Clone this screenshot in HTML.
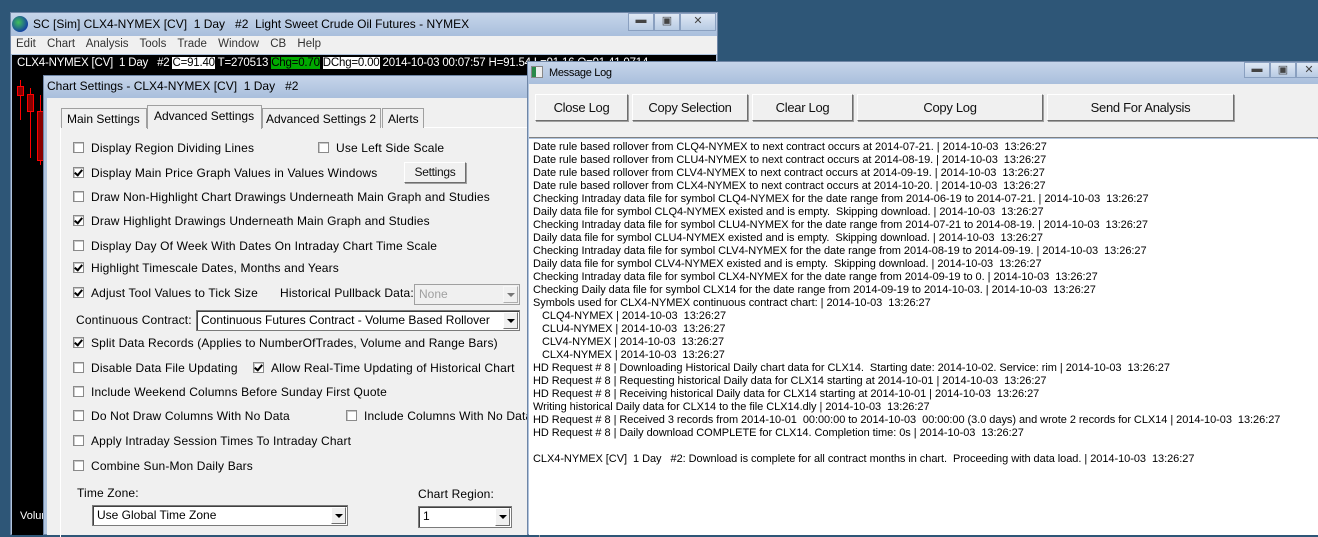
<!DOCTYPE html>
<html><head><meta charset="utf-8"><style>
*{margin:0;padding:0;box-sizing:border-box}
body{width:1318px;height:535px;overflow:hidden;background:#2e5677;position:relative;font-family:"Liberation Sans",sans-serif;color:#000}
.a{position:absolute;white-space:nowrap}
.title{background:linear-gradient(#c6d5ea,#a9bfdc);}
.cb{position:absolute;width:11px;height:11px;background:#fff;border:1px solid #8a8a8a;box-shadow:inset 1px 1px 0 #c8c8c8}
.cb.k::after{content:"";position:absolute;left:2px;top:0px;width:3px;height:6px;border:solid #000;border-width:0 2px 2px 0;transform:rotate(40deg)}
.lbl{position:absolute;white-space:nowrap;font-size:12px;letter-spacing:0.15px}
.btn{position:absolute;background:#f0f0f0;border:1px solid;border-color:#fff #6e6e6e #6e6e6e #fff;box-shadow:1px 1px 0 #a0a0a0;font-size:13px;text-align:center;letter-spacing:-0.3px;color:#111}
.combo{position:absolute;background:#fff;border:1px solid #7a7a7a;box-shadow:inset 1px 1px 0 #404040;font-size:12px;padding:2px 4px}
.dd{position:absolute;right:1px;top:1px;bottom:1px;width:15px;background:#f0f0f0;border:1px solid;border-color:#fff #6e6e6e #6e6e6e #fff}
.dd::after{content:"";position:absolute;left:3px;top:6px;border:4px solid transparent;border-top:4px solid #000;border-bottom:0}
.log div{height:13px;line-height:13px;font-size:11px;letter-spacing:-0.05px;white-space:pre}
.wb{position:absolute;top:0;width:26px;height:18px;border:1px solid #8aa0c0;background:linear-gradient(#dfe8f4,#b8cbe3);font-size:11px;text-align:center;color:#444}
</style></head><body>

<div class="a" style="left:10px;top:12px;width:708px;height:523px;background:#b0c4de;border:1px solid #6f86a6"></div>
<div class="a title" style="left:11px;top:13px;width:706px;height:23px"></div>
<div class="a" style="left:12px;top:16px;width:16px;height:16px;border-radius:50%;background:radial-gradient(circle at 40% 40%,#3fc05a,#1544a0 70%)"></div>
<div class="a" style="left:33px;top:17px;font-size:12px">SC [Sim] CLX4-NYMEX [CV]&nbsp; 1 Day &nbsp; #2&nbsp; Light Sweet Crude Oil Futures - NYMEX</div>
<div class="a" style="left:628px;top:13px;width:88px;height:19px">
<div class="wb" style="left:0">▬</div><div class="wb" style="left:26px">▣</div><div class="wb" style="left:52px;width:36px">✕</div></div>
<div class="a" style="left:11px;top:36px;width:706px;height:18px;background:#f0f0f0"></div>
<div class="a" style="left:16px;top:38px;font-size:11.5px;color:#333;word-spacing:8px">Edit Chart Analysis Tools Trade Window CB Help</div>
<div class="a" style="left:12px;top:55px;width:704px;height:480px;background:#000"></div>
<div class="a" style="left:17px;top:57px;font-size:11.5px;color:#fff;letter-spacing:-0.2px">CLX4-NYMEX [CV]&nbsp; 1 Day &nbsp; #2 <span style="background:#fff;color:#000">C=91.40</span> T=270513 <span style="background:#0a0;color:#000">Chg=0.70</span> <span style="background:#fff;color:#000">DChg=0.00</span> 2014-10-03 00:07:57 H=91.54 L=91.16 O=91.41 0714</div>
<div class="a" style="left:20px;top:80px;width:1px;height:40px;background:#f00"></div>
<div class="a" style="left:17px;top:86px;width:7px;height:10px;background:#800;border:1px solid #f00"></div>
<div class="a" style="left:30px;top:88px;width:1px;height:70px;background:#f00"></div>
<div class="a" style="left:27px;top:94px;width:7px;height:18px;background:#800;border:1px solid #f00"></div>
<div class="a" style="left:40px;top:95px;width:1px;height:70px;background:#f00"></div>
<div class="a" style="left:37px;top:111px;width:7px;height:50px;background:#800;border:1px solid #f00"></div>
<div class="a" style="left:20px;top:510px;font-size:11px;color:#fff">Volur</div>

<div class="a" style="left:43px;top:75px;width:490px;height:460px;background:#b0c4de;border:1px solid #6f86a6"></div>
<div class="a title" style="left:44px;top:76px;width:488px;height:22px"></div>
<div class="a" style="left:47px;top:79px;font-size:12px">Chart Settings - CLX4-NYMEX [CV]&nbsp; 1 Day &nbsp; #2</div>
<div class="a" style="left:47px;top:98px;width:486px;height:437px;background:#f0f0f0"></div>
<div class="a" style="left:60px;top:127px;width:480px;height:410px;border:1px solid #fff;border-right:0;border-bottom:0;box-shadow:inset -1px 0 0 #a0a0a0"></div>
<div class="a" style="left:61px;top:108px;width:86px;height:20px;border:1px solid #a0a0a0;border-bottom:0;background:#f0f0f0;font-size:12px;padding:3px 5px">Main Settings</div>
<div class="a" style="left:147px;top:105px;width:115px;height:24px;border:1px solid #a0a0a0;border-bottom:0;background:#f0f0f0;font-size:12px;padding:3px 6px">Advanced Settings</div>
<div class="a" style="left:262px;top:108px;width:119px;height:20px;border:1px solid #a0a0a0;border-bottom:0;background:#f0f0f0;font-size:12px;padding:3px 3px">Advanced Settings 2</div>
<div class="a" style="left:382px;top:108px;width:42px;height:20px;border:1px solid #a0a0a0;border-bottom:0;background:#f0f0f0;font-size:12px;padding:3px 5px">Alerts</div>

<div class="cb" style="left:73px;top:142px"></div><div class="lbl" style="left:91px;top:141px">Display Region Dividing Lines</div>
<div class="cb" style="left:318px;top:142px"></div><div class="lbl" style="left:336px;top:141px">Use Left Side Scale</div>
<div class="cb k" style="left:73px;top:167px"></div><div class="lbl" style="left:91px;top:166px">Display Main Price Graph Values in Values Windows</div>
<div class="btn" style="left:404px;top:162px;width:62px;height:21px;font-size:12px;padding-top:2px">Settings</div>
<div class="cb" style="left:73px;top:191px"></div><div class="lbl" style="left:91px;top:190px">Draw Non-Highlight Chart Drawings Underneath Main Graph and Studies</div>
<div class="cb k" style="left:73px;top:215px"></div><div class="lbl" style="left:91px;top:214px">Draw Highlight Drawings Underneath Main Graph and Studies</div>
<div class="cb" style="left:73px;top:240px"></div><div class="lbl" style="left:91px;top:239px">Display Day Of Week With Dates On Intraday Chart Time Scale</div>
<div class="cb k" style="left:73px;top:262px"></div><div class="lbl" style="left:91px;top:261px">Highlight Timescale Dates, Months and Years</div>
<div class="cb k" style="left:73px;top:287px"></div><div class="lbl" style="left:91px;top:286px">Adjust Tool Values to Tick Size</div>
<div class="lbl" style="left:280px;top:286px">Historical Pullback Data:</div>
<div class="combo" style="left:414px;top:284px;width:106px;height:21px;background:#f0f0f0;color:#a0a0a0;box-shadow:none;border-color:#a0a0a0">None<div class="dd" style="opacity:.5"></div></div>
<div class="lbl" style="left:76px;top:313px">Continuous Contract:</div>
<div class="combo" style="left:196px;top:310px;width:324px;height:21px">Continuous Futures Contract - Volume Based Rollover<div class="dd"></div></div>
<div class="cb k" style="left:73px;top:337px"></div><div class="lbl" style="left:91px;top:336px">Split Data Records (Applies to NumberOfTrades, Volume and Range Bars)</div>
<div class="cb" style="left:73px;top:362px"></div><div class="lbl" style="left:91px;top:361px">Disable Data File Updating</div>
<div class="cb k" style="left:253px;top:362px"></div><div class="lbl" style="left:271px;top:361px">Allow Real-Time Updating of Historical Chart</div>
<div class="cb" style="left:73px;top:386px"></div><div class="lbl" style="left:91px;top:385px">Include Weekend Columns Before Sunday First Quote</div>
<div class="cb" style="left:73px;top:410px"></div><div class="lbl" style="left:91px;top:409px">Do Not Draw Columns With No Data</div>
<div class="cb" style="left:346px;top:410px"></div><div class="lbl" style="left:364px;top:409px">Include Columns With No Data</div>
<div class="cb" style="left:73px;top:435px"></div><div class="lbl" style="left:91px;top:434px">Apply Intraday Session Times To Intraday Chart</div>
<div class="cb" style="left:73px;top:460px"></div><div class="lbl" style="left:91px;top:459px">Combine Sun-Mon Daily Bars</div>
<div class="lbl" style="left:77px;top:486px">Time Zone:</div>
<div class="lbl" style="left:418px;top:487px">Chart Region:</div>
<div class="combo" style="left:92px;top:505px;width:256px;height:21px">Use Global Time Zone<div class="dd"></div></div>
<div class="combo" style="left:418px;top:506px;width:94px;height:22px">1<div class="dd"></div></div>

<div class="a" style="left:527px;top:61px;width:791px;height:474px;background:#b0c4de;border:1px solid #6f86a6"></div>
<div class="a title" style="left:528px;top:62px;width:790px;height:22px"></div>
<div class="a" style="left:531px;top:66px;width:12px;height:12px;background:linear-gradient(90deg,#2a8a4a 0 40%,#eee 40%);border:1px solid #888"></div>
<div class="a" style="left:549px;top:67px;font-size:11px;letter-spacing:-0.3px">Message Log</div>
<div class="a" style="left:1244px;top:62px;width:74px;height:17px">
<div class="wb" style="left:0;height:16px">▬</div><div class="wb" style="left:26px;height:16px">▣</div><div class="wb" style="left:52px;width:26px;height:16px">✕</div></div>
<div class="a" style="left:529px;top:84px;width:789px;height:54px;background:#f0f0f0;border-bottom:1px solid #808080"></div>
<div class="btn" style="left:535px;top:94px;width:93px;height:27px;padding-top:5px">Close Log</div>
<div class="btn" style="left:632px;top:94px;width:116px;height:27px;padding-top:5px">Copy Selection</div>
<div class="btn" style="left:752px;top:94px;width:101px;height:27px;padding-top:5px">Clear Log</div>
<div class="btn" style="left:857px;top:94px;width:186px;height:27px;padding-top:5px">Copy Log</div>
<div class="btn" style="left:1047px;top:94px;width:187px;height:27px;padding-top:5px">Send For Analysis</div>
<div class="a log" style="left:529px;top:139px;width:789px;height:396px;background:#fff;padding:2px 0 0 4px">
<div>Date rule based rollover from CLQ4-NYMEX to next contract occurs at 2014-07-21. | 2014-10-03  13:26:27</div>
<div>Date rule based rollover from CLU4-NYMEX to next contract occurs at 2014-08-19. | 2014-10-03  13:26:27</div>
<div>Date rule based rollover from CLV4-NYMEX to next contract occurs at 2014-09-19. | 2014-10-03  13:26:27</div>
<div>Date rule based rollover from CLX4-NYMEX to next contract occurs at 2014-10-20. | 2014-10-03  13:26:27</div>
<div>Checking Intraday data file for symbol CLQ4-NYMEX for the date range from 2014-06-19 to 2014-07-21. | 2014-10-03  13:26:27</div>
<div>Daily data file for symbol CLQ4-NYMEX existed and is empty.  Skipping download. | 2014-10-03  13:26:27</div>
<div>Checking Intraday data file for symbol CLU4-NYMEX for the date range from 2014-07-21 to 2014-08-19. | 2014-10-03  13:26:27</div>
<div>Daily data file for symbol CLU4-NYMEX existed and is empty.  Skipping download. | 2014-10-03  13:26:27</div>
<div>Checking Intraday data file for symbol CLV4-NYMEX for the date range from 2014-08-19 to 2014-09-19. | 2014-10-03  13:26:27</div>
<div>Daily data file for symbol CLV4-NYMEX existed and is empty.  Skipping download. | 2014-10-03  13:26:27</div>
<div>Checking Intraday data file for symbol CLX4-NYMEX for the date range from 2014-09-19 to 0. | 2014-10-03  13:26:27</div>
<div>Checking Daily data file for symbol CLX14 for the date range from 2014-09-19 to 2014-10-03. | 2014-10-03  13:26:27</div>
<div>Symbols used for CLX4-NYMEX continuous contract chart: | 2014-10-03  13:26:27</div>
<div>   CLQ4-NYMEX | 2014-10-03  13:26:27</div>
<div>   CLU4-NYMEX | 2014-10-03  13:26:27</div>
<div>   CLV4-NYMEX | 2014-10-03  13:26:27</div>
<div>   CLX4-NYMEX | 2014-10-03  13:26:27</div>
<div>HD Request # 8 | Downloading Historical Daily chart data for CLX14.  Starting date: 2014-10-02. Service: rim | 2014-10-03  13:26:27</div>
<div>HD Request # 8 | Requesting historical Daily data for CLX14 starting at 2014-10-01 | 2014-10-03  13:26:27</div>
<div>HD Request # 8 | Receiving historical Daily data for CLX14 starting at 2014-10-01 | 2014-10-03  13:26:27</div>
<div>Writing historical Daily data for CLX14 to the file CLX14.dly | 2014-10-03  13:26:27</div>
<div>HD Request # 8 | Received 3 records from 2014-10-01  00:00:00 to 2014-10-03  00:00:00 (3.0 days) and wrote 2 records for CLX14 | 2014-10-03  13:26:27</div>
<div>HD Request # 8 | Daily download COMPLETE for CLX14. Completion time: 0s | 2014-10-03  13:26:27</div>
<div> </div>
<div>CLX4-NYMEX [CV]  1 Day   #2: Download is complete for all contract months in chart.  Proceeding with data load. | 2014-10-03  13:26:27</div>
</div>
</body></html>
